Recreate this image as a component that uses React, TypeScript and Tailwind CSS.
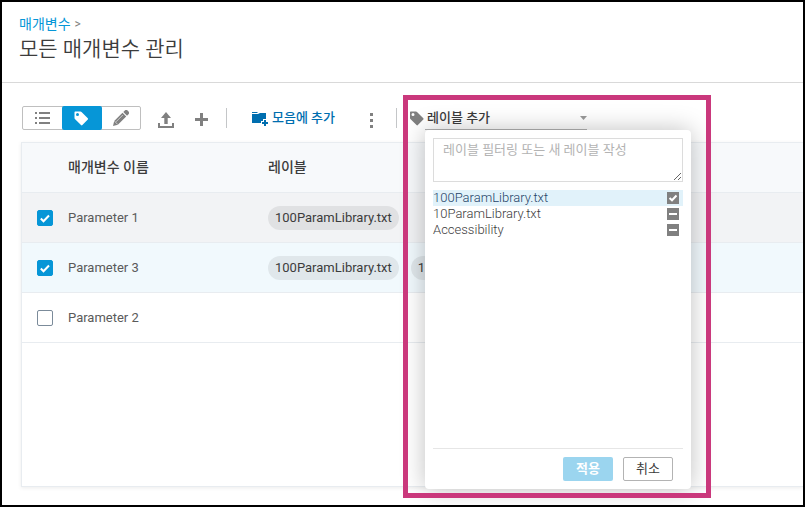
import React, { useState } from "react";

interface Parameter {
  name: string;
  labels: string[];
  checked: boolean;
  rowClass: string;
}

interface LabelOption {
  name: string;
  state: "all" | "some";
}

const PARAMETERS: Parameter[] = [
  { name: "Parameter 1", labels: ["100ParamLibrary.txt"], checked: true, rowClass: "bg-[#f2f3f5]" },
  {
    name: "Parameter 3",
    labels: ["100ParamLibrary.txt", "10ParamLibrary.txt"],
    checked: true,
    rowClass: "bg-[#f1f9fd]",
  },
  { name: "Parameter 2", labels: [], checked: false, rowClass: "bg-white" },
];

const LABELS: LabelOption[] = [
  { name: "100ParamLibrary.txt", state: "all" },
  { name: "10ParamLibrary.txt", state: "some" },
  { name: "Accessibility", state: "some" },
];

const TagIcon: React.FC<{ className?: string }> = ({ className }) => (
  <svg className={className} viewBox="0 0 15 15" fill="currentColor" aria-hidden="true">
    <path
      fillRule="evenodd"
      d="M1.2 0.5h5.3a1.5 1.5 0 0 1 1 .4l6.3 6.3a1 1 0 0 1 0 1.4l-5.4 5.5a1 1 0 0 1-1.4 0L.9 8a1.500 1.500 0 0 1-.4-1V1.200a.7.7 0 0 1 .7-.7zM3.500 2a1.500 1.500 0 1 0 0 3 1.500 1.500 0 0 0 0-3z"
    />
  </svg>
);

const ListIcon = () => (
  <svg className="w-[15px] h-[13px]" viewBox="0 0 15 13" fill="currentColor" aria-hidden="true">
    <path d="M0 0h2v2H0zM4 0h11v2H4zM0 5h2v2H0zM4 5h11v2H4zM0 10h2v2H0zM4 10h11v2H4z" />
  </svg>
);

const PencilIcon = () => (
  <svg className="w-4 h-4" viewBox="0 0 16 16" fill="currentColor" aria-hidden="true">
    <path d="M0 16l1.200-4.900L9.500 2.800l3.700 3.700-8.300 8.300zM10.300 2L11.600.7a2.200 2.200 0 0 1 3.200 0l.5.5a2.200 2.200 0 0 1 0 3.200L14 5.700z" />
    <path d="M3 11.800L9.800 5M1.500 11.200L4.800 14.500" stroke="#fff" strokeWidth="0.600" />
  </svg>
);

const UploadIcon = () => (
  <svg className="w-4 h-4" viewBox="0 0 16 16" fill="currentColor" aria-hidden="true">
    <path d="M8 0l5 6H9.700v6H6.300V6H3zM0 11h2v3h12v-3h2v5H0z" />
  </svg>
);

const FolderAddIcon = () => (
  <svg className="w-4 h-[15px]" viewBox="0 0 16 15" fill="currentColor" aria-hidden="true">
    <path d="M0 1h5l1 1H0zM0 3h6l2-1h6v6h-3v2H9v2H0z" />
    <path d="M12 9h2v2h2v2h-2v2h-2v-2h-2v-2h2z" />
  </svg>
);

const Divider = () => <span className="w-px h-5 bg-[#c4c6c8]" />;

const RowCheckbox: React.FC<{ label: string; initial: boolean }> = ({ label, initial }) => {
  const [checked, setChecked] = useState(initial);
  return (
    <span className="grid w-4 h-4 place-items-center">
      <input
        type="checkbox"
        aria-label={label}
        checked={checked}
        onChange={() => setChecked(!checked)}
        className="col-start-1 row-start-1 appearance-none w-4 h-4 rounded-xs border border-[#7b8b9a] bg-white checked:bg-[#0696d7] checked:border-[#0696d7]"
      />
      {checked && (
        <svg className="col-start-1 row-start-1 w-3 h-3 pointer-events-none" viewBox="0 0 12 12" fill="none">
          <path d="M1.800 6.500L4.500 9.200L10 3.500" stroke="#fff" strokeWidth="2" />
        </svg>
      )}
    </span>
  );
};

const LabelRow: React.FC<{ option: LabelOption; active: boolean }> = ({ option, active }) => (
  <label
    className={`flex items-center justify-between h-4 pr-1 ${active ? "bg-[#e1f2fa] text-[#1f4468]" : "text-[#3c3c3c]"}`}
  >
    <span>{option.name}</span>
    <span className="grid w-3 h-3 place-items-center">
      <input
        type="checkbox"
        defaultChecked={option.state === "all"}
        className="col-start-1 row-start-1 appearance-none w-3 h-3 bg-[#808080]"
      />
      <svg className="col-start-1 row-start-1 w-3 h-3 pointer-events-none" viewBox="0 0 12 12" fill="none">
        <path
          d={option.state === "all" ? "M2.500 6L5 8.300L9.500 3.500" : "M2 6H10"}
          stroke="#fff"
          strokeWidth="2"
        />
      </svg>
    </span>
  </label>
);

const LabelMenu = () => (
  <div className="absolute z-10 top-full left-4 flex flex-col w-[266px] h-[359px] p-2 rounded-sm bg-white shadow-[0_0_24px_rgba(0,0,0,0.25)]">
    <textarea
      aria-label="레이블 필터링"
      placeholder="레이블 필터링 또는 새 레이블 작성"
      className="block w-full h-11 px-[9px] py-px resize border border-[#dcdcdc] bg-white text-[13px] leading-5 placeholder:text-[#b3b3b3]"
    />
    <div className="flex-1 pt-2 text-[13px] leading-4 font-light">
      {LABELS.map((option, index) => (
        <LabelRow key={option.name} option={option} active={index === 0} />
      ))}
    </div>
    <div className="flex justify-end gap-2.5 pt-2 pr-2.5 border-t border-[#e6e6e6] text-[13px]">
      <button className="w-[50px] h-6 rounded-xs bg-[#9bd5ef] font-bold leading-6 text-white">적용</button>
      <button className="w-[50px] h-6 rounded-xs border border-[#b3b3b3] bg-white leading-5 text-[#3c3c3c]">
        취소
      </button>
    </div>
  </div>
);

const Toolbar = () => (
  <div className="flex items-center h-6 pl-5 text-[#808080]">
    <div className="flex w-[119px] h-6 rounded-xs border border-[#bfbfbf]">
      <button aria-label="목록" className="flex flex-1 items-center justify-center">
        <ListIcon />
      </button>
      <button
        aria-label="레이블"
        className="flex w-10 h-6 -mt-px items-center justify-center rounded-xs bg-[#0696d7] text-white"
      >
        <TagIcon className="w-[15px] h-[15px]" />
      </button>
      <button aria-label="편집" className="flex flex-1 items-center justify-center">
        <PencilIcon />
      </button>
    </div>
    <button aria-label="업로드" className="ml-[17px] pt-1">
      <UploadIcon />
    </button>
    <button aria-label="추가" className="ml-[21px] pt-0.5">
      <svg className="w-[13px] h-[13px]" viewBox="0 0 13 13" fill="currentColor">
        <path d="M5 0h3v5h5v3H8v5H5V8H0V5h5z" />
      </svg>
    </button>
    <span className="flex ml-[18px]">
      <Divider />
    </span>
    <button className="flex items-center gap-1 ml-[25px] text-[13px] leading-6 font-medium text-[#006eaf]">
      <FolderAddIcon />
      모음에 추가
    </button>
    <button aria-label="더 보기" className="ml-[35px] pt-1">
      <svg className="w-[3px] h-[15px]" viewBox="0 0 3 15" fill="currentColor">
        <path d="M0 0h3v3H0zM0 6h3v3H0zM0 12h3v3H0z" />
      </svg>
    </button>
    <span className="flex ml-[23px] mr-3">
      <Divider />
    </span>
    <div className="relative flex items-center h-6">
      <TagIcon className="w-4 h-[15px]" />
      <button className="flex items-center justify-between w-[162px] h-6 pl-0.5 border-b border-[#b3b3b3] text-[13px] leading-5 font-medium text-[#3c3c3c]">
        레이블 추가
        <svg className="w-[7px] h-1" viewBox="0 0 7 4" fill="#999">
          <path d="M0 0h7L3.500 4z" />
        </svg>
      </button>
      <LabelMenu />
      <div className="absolute z-20 -top-[11px] -left-[6px] w-[308px] h-[403px] border-5 border-[#ca387c] pointer-events-none" />
    </div>
  </div>
);

const ParameterTable = () => (
  <div className="flex-1 ml-[19px] border-l border-y border-[#e8ecf0] bg-white shadow-[0_1px_4px_rgba(0,0,0,0.08)]">
    <table className="w-full table-fixed border-collapse text-[13px] text-[#5a5a5a]">
      <thead>
        <tr className="h-[49px] border-b border-[#e8ecf0] bg-[#f7f9fb] text-left text-sm text-[#3c3c3c]">
          <th className="w-[46px]" />
          <th className="w-[200px] font-medium">매개변수 이름</th>
          <th className="font-medium">레이블</th>
        </tr>
      </thead>
      <tbody>
        {PARAMETERS.map((parameter) => (
          <tr key={parameter.name} className={`h-[50px] border-b border-[#e8ecf0] ${parameter.rowClass}`}>
            <td className="pt-0.5 pl-[15px]">
              <RowCheckbox label={parameter.name} initial={parameter.checked} />
            </td>
            <td className="pt-0.5">{parameter.name}</td>
            <td className="pt-0.5">
              <div className="flex gap-3">
                {parameter.labels.map((label) => (
                  <span key={label} className="px-[7px] leading-6 rounded-full bg-black/7 text-[#3c3c3c]">
                    {label}
                  </span>
                ))}
              </div>
            </td>
          </tr>
        ))}
      </tbody>
    </table>
  </div>
);

const App = () => {
  return (
    <div className="flex flex-col min-h-screen overflow-hidden border-2 border-black bg-white font-['Roboto','Noto_Sans_CJK_KR',sans-serif]">
      <header className="h-[81px] pt-3 pl-[17px] border-b border-[#d9d9d9]">
        <nav className="flex gap-1 text-sm leading-5 text-[#808080]">
          <a href="#parameters" className="text-[#0696d7]">
            매개변수
          </a>
          <span className="text-xs leading-5">&gt;</span>
        </nav>
        <h1 className="text-[21px] leading-[30px] font-[350] text-[#3c3c3c]">모든 매개변수 관리</h1>
      </header>
      <main className="flex flex-1 flex-col gap-3 pt-[23px] pb-[18px]">
        <Toolbar />
        <ParameterTable />
      </main>
    </div>
  );
};

export default App;
